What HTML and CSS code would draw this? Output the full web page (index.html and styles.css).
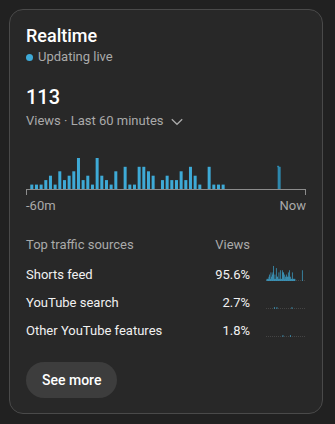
FILE: index.html
```html
<!DOCTYPE html>
<html>
<head>
<meta charset="utf-8">
<link rel="stylesheet" href="styles.css">
</head>
<body>
<div class="card">
  <h2 class="title">Realtime</h2>
  <div class="live"><span class="dot"></span>Updating live</div>
  <div class="count">113</div>
  <div class="range">Views · Last 60 minutes
    <svg class="chev" width="12" height="8" viewBox="0 0 12 8"><path d="M0.8 1.2 L6 6.3 L11.2 1.2" fill="none" stroke="#aaaaaa" stroke-width="1.3"/></svg>
  </div>
  <svg class="chart" width="280" height="56" viewBox="0 0 280 56">
    <g class="bars">
      <rect x="4.30" y="44.6" width="3" height="4.4"/>
      <rect x="8.97" y="44.6" width="3" height="4.4"/>
      <rect x="13.63" y="44.6" width="3" height="4.4"/>
      <rect x="18.30" y="40.1" width="3" height="8.9"/>
      <rect x="22.97" y="35.7" width="3" height="13.3"/>
      <rect x="27.64" y="44.6" width="3" height="4.4"/>
      <rect x="32.30" y="31.3" width="3" height="17.7"/>
      <rect x="36.97" y="40.1" width="3" height="8.9"/>
      <rect x="41.64" y="35.7" width="3" height="13.3"/>
      <rect x="46.30" y="31.3" width="3" height="17.7"/>
      <rect x="50.97" y="18" width="3" height="31"/>
      <rect x="55.64" y="40.1" width="3" height="8.9"/>
      <rect x="60.30" y="35.7" width="3" height="13.3"/>
      <rect x="64.97" y="44.6" width="3" height="4.4"/>
      <rect x="69.64" y="18" width="3" height="31"/>
      <rect x="74.31" y="35.7" width="3" height="13.3"/>
      <rect x="78.97" y="40.1" width="3" height="8.9"/>
      <rect x="83.64" y="44.6" width="3" height="4.4"/>
      <rect x="88.31" y="31.3" width="3" height="17.7"/>
      <rect x="97.64" y="26.8" width="3" height="22.2"/>
      <rect x="102.31" y="44.6" width="3" height="4.4"/>
      <rect x="106.97" y="44.6" width="3" height="4.4"/>
      <rect x="111.64" y="26.8" width="3" height="22.2"/>
      <rect x="116.31" y="26.8" width="3" height="22.2"/>
      <rect x="120.98" y="31.3" width="3" height="17.7"/>
      <rect x="125.64" y="35.7" width="3" height="13.3"/>
      <rect x="134.98" y="40.1" width="3" height="8.9"/>
      <rect x="139.64" y="35.7" width="3" height="13.3"/>
      <rect x="144.31" y="40.1" width="3" height="8.9"/>
      <rect x="148.98" y="40.1" width="3" height="8.9"/>
      <rect x="153.64" y="31.3" width="3" height="17.7"/>
      <rect x="158.31" y="40.1" width="3" height="8.9"/>
      <rect x="162.98" y="26.8" width="3" height="22.2"/>
      <rect x="167.65" y="35.7" width="3" height="13.3"/>
      <rect x="172.31" y="44.6" width="3" height="4.4"/>
      <rect x="181.65" y="26.8" width="3" height="22.2"/>
      <rect x="186.31" y="44.6" width="3" height="4.4"/>
      <rect x="190.98" y="44.6" width="3" height="4.4"/>
      <rect x="195.65" y="44.6" width="3" height="4.4"/>
    </g>
    <rect class="current" x="251.65" y="26.8" width="3" height="22.2"/>
    <rect class="current" x="251.15" y="25.8" width="2" height="1.4"/>
    <rect class="axisline" x="0" y="49" width="280" height="1"/>
    <rect class="axisline" x="0" y="49" width="1" height="6"/>
    <rect class="axisline" x="279" y="49" width="1" height="6"/>
  </svg>
  <div class="axis"><span>-60m</span><span>Now</span></div>

  <div class="sources">
    <div class="head">Top traffic sources</div>
    <div class="head num">Views</div>
    <div class="head"></div>

    <div class="cell">Shorts feed</div>
    <div class="cell num">95.6%</div>
    <svg class="spark" width="40" height="28" viewBox="0 0 280 28" preserveAspectRatio="none">
      <line class="sparkbase" x1="0" y1="19.5" x2="280" y2="19.5"/>
      <g class="bars">
        <rect x="4.30" y="17.85" width="4.67" height="2.15"/>
        <rect x="8.97" y="17.85" width="4.67" height="2.15"/>
        <rect x="13.63" y="17.85" width="4.67" height="2.15"/>
        <rect x="18.30" y="15.7" width="4.67" height="4.3"/>
        <rect x="22.97" y="13.55" width="4.67" height="6.45"/>
        <rect x="27.64" y="17.85" width="4.67" height="2.15"/>
        <rect x="32.30" y="11.4" width="4.67" height="8.6"/>
        <rect x="36.97" y="15.7" width="4.67" height="4.3"/>
        <rect x="41.64" y="13.55" width="4.67" height="6.45"/>
        <rect x="46.30" y="11.4" width="4.67" height="8.6"/>
        <rect x="50.97" y="4.95" width="4.67" height="15.05"/>
        <rect x="55.64" y="17.85" width="4.67" height="2.15"/>
        <rect x="60.30" y="13.55" width="4.67" height="6.45"/>
        <rect x="64.97" y="17.85" width="4.67" height="2.15"/>
        <rect x="69.64" y="7.1" width="4.67" height="12.9"/>
        <rect x="74.31" y="15.7" width="4.67" height="4.3"/>
        <rect x="78.97" y="15.7" width="4.67" height="4.3"/>
        <rect x="83.64" y="17.85" width="4.67" height="2.15"/>
        <rect x="88.31" y="11.4" width="4.67" height="8.6"/>
        <rect x="92.97" y="17.85" width="4.67" height="2.15"/>
        <rect x="97.64" y="9.25" width="4.67" height="10.75"/>
        <rect x="102.31" y="17.85" width="4.67" height="2.15"/>
        <rect x="106.97" y="17.85" width="4.67" height="2.15"/>
        <rect x="111.64" y="9.25" width="4.67" height="10.75"/>
        <rect x="116.31" y="11.4" width="4.67" height="8.6"/>
        <rect x="120.98" y="11.4" width="4.67" height="8.6"/>
        <rect x="125.64" y="13.55" width="4.67" height="6.45"/>
        <rect x="130.31" y="17.85" width="4.67" height="2.15"/>
        <rect x="134.98" y="15.7" width="4.67" height="4.3"/>
        <rect x="139.64" y="13.55" width="4.67" height="6.45"/>
        <rect x="144.31" y="15.7" width="4.67" height="4.3"/>
        <rect x="148.98" y="15.7" width="4.67" height="4.3"/>
        <rect x="153.64" y="11.4" width="4.67" height="8.6"/>
        <rect x="158.31" y="15.7" width="4.67" height="4.3"/>
        <rect x="162.98" y="9.25" width="4.67" height="10.75"/>
        <rect x="167.65" y="15.7" width="4.67" height="4.3"/>
        <rect x="172.31" y="17.85" width="4.67" height="2.15"/>
        <rect x="176.98" y="17.85" width="4.67" height="2.15"/>
        <rect x="181.65" y="11.4" width="4.67" height="8.6"/>
        <rect x="186.31" y="17.85" width="4.67" height="2.15"/>
        <rect x="190.98" y="17.85" width="4.67" height="2.15"/>
        <rect x="195.65" y="17.85" width="4.67" height="2.15"/>
        <rect x="200.3" y="17.85" width="4.67" height="2.15"/>
        <rect x="251.65" y="9.25" width="4.67" height="10.75"/>
      </g>
    </svg>

    <div class="cell">YouTube search</div>
    <div class="cell num">2.7%</div>
    <svg class="spark" width="40" height="28" viewBox="0 0 280 28" preserveAspectRatio="none">
      <line class="sparkbase" x1="0" y1="19.5" x2="280" y2="19.5"/>
      <g class="bars">
        <rect x="55.64" y="18" width="4.67" height="2"/>
        <rect x="74.31" y="18" width="4.67" height="2"/>
        <rect x="179.5" y="18" width="4.67" height="2"/>
      </g>
    </svg>

    <div class="cell">Other YouTube features</div>
    <div class="cell num">1.8%</div>
    <svg class="spark" width="40" height="28" viewBox="0 0 280 28" preserveAspectRatio="none">
      <line class="sparkbase" x1="0" y1="19.5" x2="280" y2="19.5"/>
      <g class="bars">
        <rect x="116.31" y="18" width="4.67" height="2"/>
        <rect x="167.65" y="18" width="4.67" height="2"/>
      </g>
    </svg>
  </div>

  <button class="more">See more</button>
</div>
</body>
</html>
```

FILE: styles.css
```css
html, body {
  margin: 0;
  padding: 0;
}
body {
  background: #212121;
  font-family: Roboto, "Liberation Sans", sans-serif;
  color: #f1f1f1;
  padding: 9px 12px 0 9px;
}
.card {
  width: 314px;
  box-sizing: border-box;
  border: 1px solid #4a4a4a;
  border-radius: 14px;
  background: #282828;
  padding: 14px 16px 15px 16px;
}
.title {
  margin: 0;
  font-size: 18px;
  line-height: 24px;
  font-weight: 500;
  color: #fff;
}
.live {
  display: flex;
  align-items: center;
  gap: 5px;
  font-size: 13px;
  line-height: 18px;
  color: #aaaaaa;
}
.dot {
  width: 7px;
  height: 7px;
  border-radius: 50%;
  background: #3eaad8;
}
.count {
  margin-top: 17px;
  font-size: 20px;
  line-height: 28px;
  font-weight: 500;
  color: #fff;
}
.range {
  margin-top: 1px;
  display: flex;
  align-items: center;
  gap: 7px;
  font-size: 13px;
  line-height: 18px;
  color: #aaaaaa;
}
.chev {
  display: block;
  margin-top: 1px;
}
.chart {
  display: block;
  margin-top: 10px;
}
.bars {
  fill: #3eaad6;
}
.current {
  fill: #2d87ac;
}
.axisline {
  fill: #8c8c8c;
}
.axis {
  margin-top: 1px;
  display: flex;
  justify-content: space-between;
  font-size: 13px;
  line-height: 18px;
  color: #aaaaaa;
}
.sources {
  margin-top: 21px;
  display: grid;
  grid-template-columns: 1fr auto 40px;
  column-gap: 16px;
  grid-auto-rows: 28px;
  grid-template-rows: 25px;
}
.head {
  font-size: 13px;
  line-height: 18px;
  color: #aaaaaa;
}
.cell {
  font-size: 13px;
  line-height: 28px;
  color: #f1f1f1;
}
.num {
  text-align: right;
}
.spark {
  display: block;
}
.sparkbase {
  stroke: #5a5a5a;
  stroke-width: 1;
  stroke-dasharray: 7 7;
}
.more {
  display: block;
  margin-top: 17px;
  height: 36px;
  padding: 0 16px;
  border: none;
  border-radius: 18px;
  background: #3d3d3d;
  color: #fff;
  font-family: Roboto, "Liberation Sans", sans-serif;
  font-size: 14px;
  font-weight: 500;
}
```
